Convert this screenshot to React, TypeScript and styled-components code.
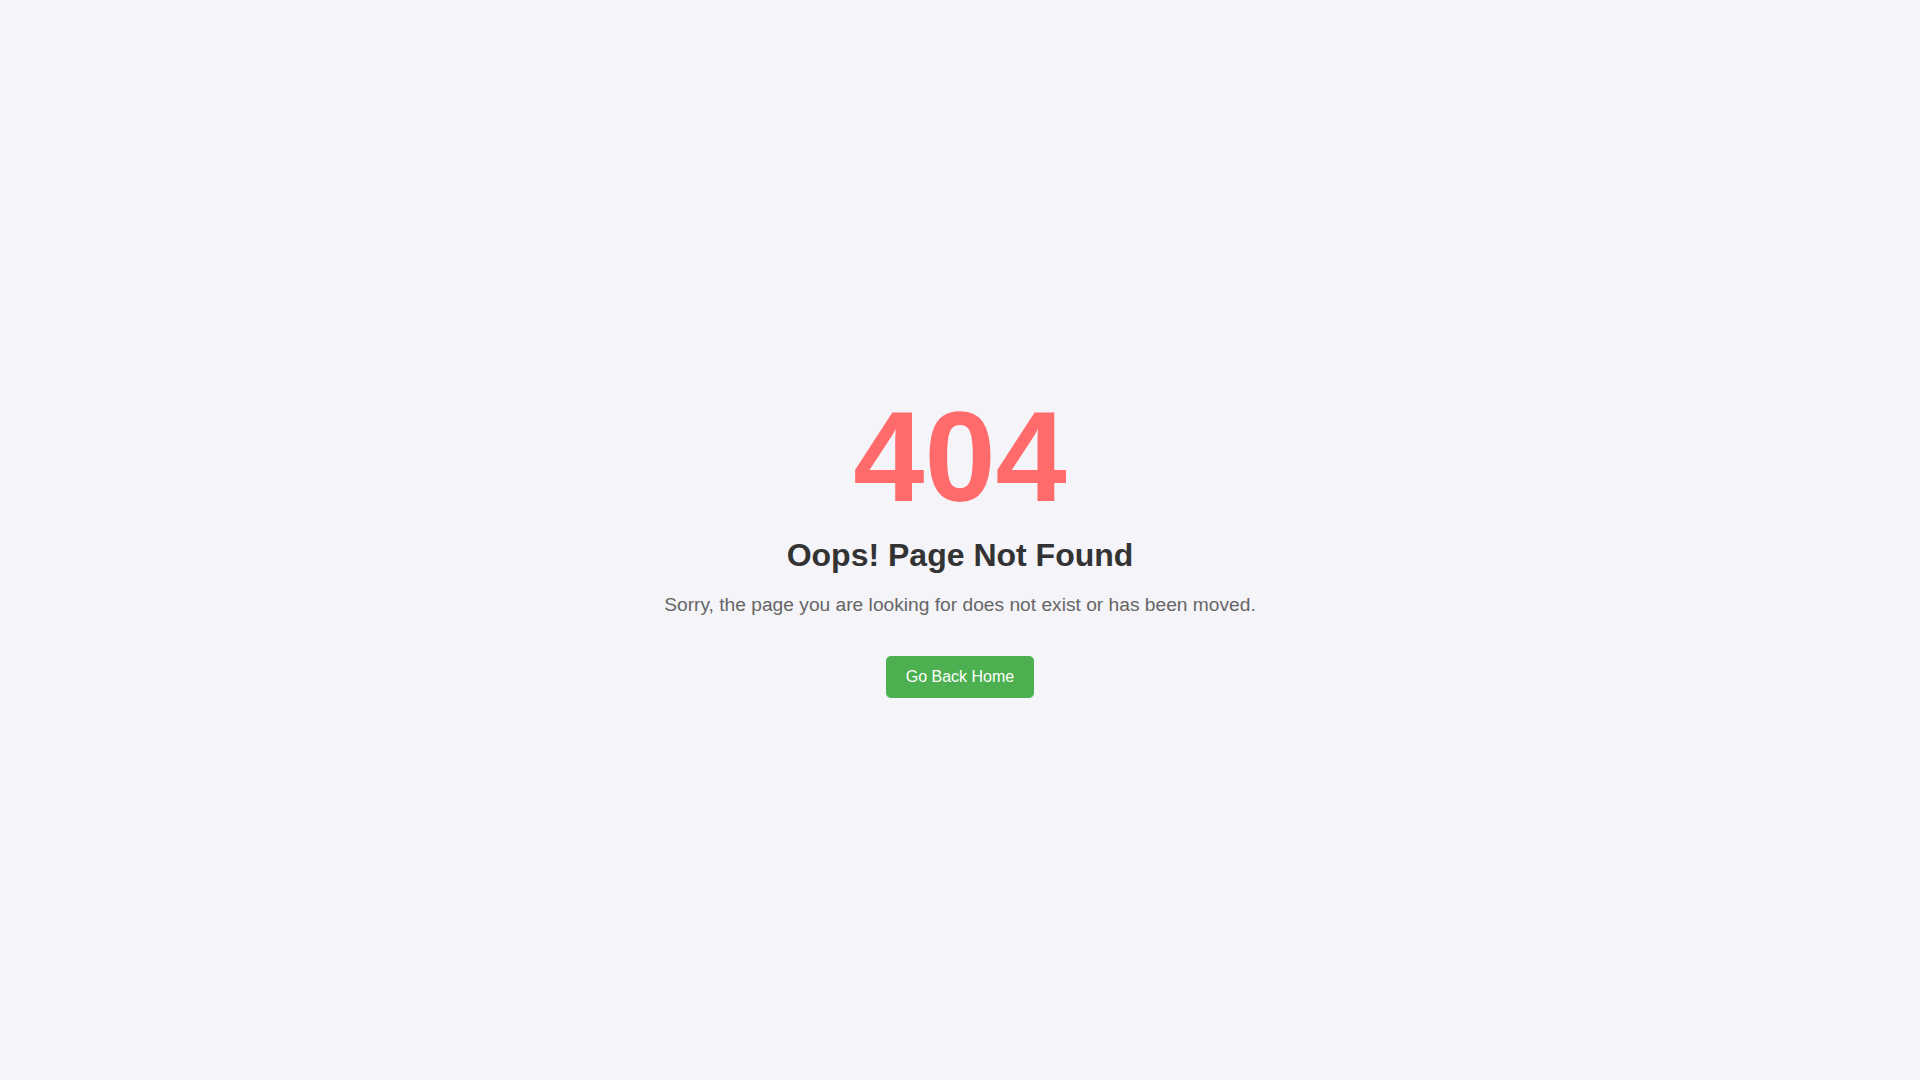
import React from 'react';
import styled, { createGlobalStyle } from 'styled-components';

const GlobalStyle = createGlobalStyle`
  html, body {
    margin: 0;
    padding: 0;
    background: #f4f4f9;
    font-family: 'Liberation Sans', Arial, sans-serif;
  }
`;

const Page = styled.main`
  min-height: 100vh;
  display: flex;
  flex-direction: column;
  align-items: center;
  justify-content: center;
  text-align: center;
`;

const Code = styled.h1`
  margin: 0;
  font-size: 128px;
  font-weight: 700;
  color: #ff6b6b;
`;

const Title = styled.h2`
  margin: 7px 0 20px;
  font-size: 32px;
  font-weight: 700;
  color: #333;
`;

const Message = styled.p`
  margin: 0 0 40px;
  font-size: 19.2px;
  color: #666;
`;

const HomeButton = styled.a`
  display: inline-block;
  padding: 12px 20px;
  font-size: 16px;
  color: #fff;
  background: #4caf50;
  border-radius: 5px;
  text-decoration: none;
  cursor: pointer;

  &:hover {
    background: #45a049;
  }
`;

export default function App() {
  return (
    <>
      <GlobalStyle />
      <Page>
        <Code>404</Code>
        <Title>Oops! Page Not Found</Title>
        <Message>Sorry, the page you are looking for does not exist or has been moved.</Message>
        <HomeButton href="#">Go Back Home</HomeButton>
      </Page>
    </>
  );
}
